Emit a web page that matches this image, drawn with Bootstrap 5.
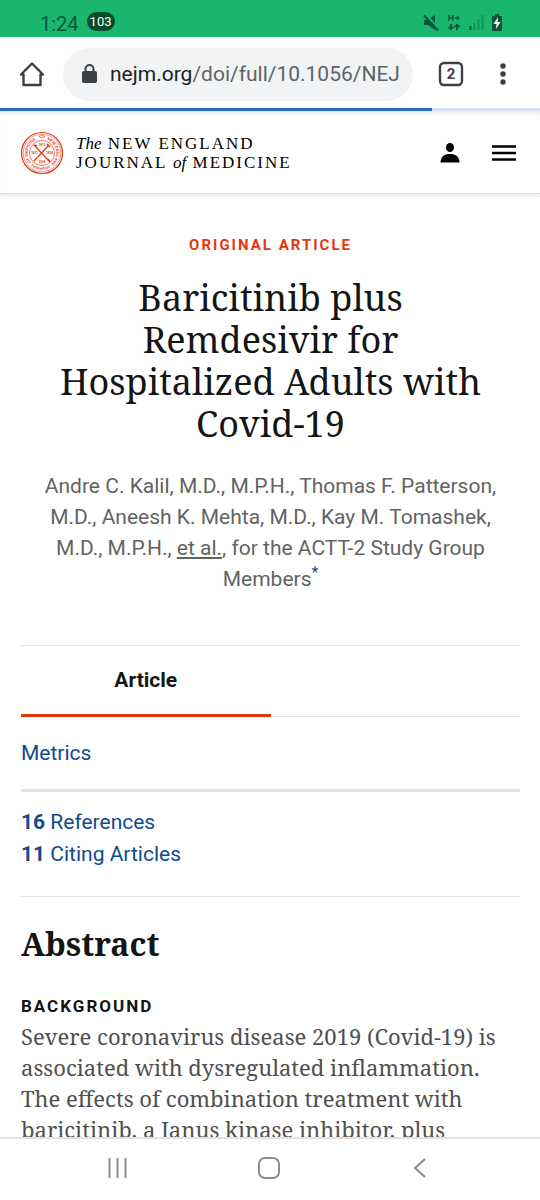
<!DOCTYPE html>
<html lang="en">
<head>
<meta charset="utf-8">
<meta name="viewport" content="width=device-width, initial-scale=1">
<title>Baricitinib plus Remdesivir for Hospitalized Adults with Covid-19</title>
<link href="https://cdn.jsdelivr.net/npm/bootstrap@5.3.0/dist/css/bootstrap.min.css" rel="stylesheet">
<style>
  :root { --serif: "Noto Serif", "DejaVu Serif Condensed", "DejaVu Serif", serif; --ink: #151515; --red: #e0390f; --blue: #0f4b8f; --rule: #e2e2e2; }
  body { font-family: Roboto, "Liberation Sans", sans-serif; color: var(--ink); font-size: 21px; line-height: 32px; }
  button { background: none; border: 0; padding: 0; display: flex; color: inherit; }
  svg { display: block; flex: none; }
  a { color: var(--blue); text-decoration: none; }
  .status { background: #18b76d; color: #075634; height: 37px; padding: 8px 38px 0 40px; font-size: 20px; line-height: 32px; }
  .count { background: #074b2c; color: #fff; font-size: 13px; line-height: 19px; padding: 0 3px; border-radius: 10px; }
  .signals { gap: 8px; padding-top: 5px; }
  .browser { height: 71px; padding: 3px 24px 0 19px; color: #3c4043; }
  .address { background: #f1f3f4; height: 53px; border-radius: 27px; padding: 0 12px 0 19px; margin: 0 25px 0 18px; gap: 13px; }
  .address a { font-size: 21px; color: #5f6368; }
  .host { color: #202124; }
  .more { margin-left: 26px; }
  .load { height: 3px; background: #d6dff3; border-radius: 0; }
  .load .progress-bar { background: #2069c8; }
  .masthead { height: 83px; padding: 1px 23px 0 20px; border-bottom: 1px solid #ddd; box-shadow: 0 2px 3px #e9e9e9, inset 0 4px 4px -2px #e4e4e4; }
  .brand { font-family: "Liberation Serif", serif; font-size: 17px; line-height: 19px; letter-spacing: 2px; color: #000; }
  .brand i { letter-spacing: 0; }
  .seal-text { font: bold 4px "Liberation Sans", sans-serif; fill: var(--red); }
  .seal-year { font: bold 3px "Liberation Sans", sans-serif; fill: var(--red); }
  main { overflow: hidden; padding: 35px 20px 0 21px; min-height: 0; }
  .kicker { font-size: 15px; line-height: 32px; font-weight: 700; letter-spacing: 2px; }
  .kicker a { color: var(--red); }
  h1 { font: 400 36px/42px var(--serif); margin: 16px 24px 26px; }
  .authors { color: #636363; margin: 0 20px 50px; line-height: 31px; }
  .authors a { text-decoration: underline; color: inherit; }
  .authors sup a { color: var(--blue); text-decoration: none; }
  .tabs { border-top: 1px solid var(--rule); border-bottom: 1px solid var(--rule); }
  .tabs .nav-link { color: var(--ink); font-weight: 700; line-height: 32px; padding: 18px 0; border-bottom: 3px solid var(--red); margin-bottom: -1px; }
  .metrics { padding: 20px 0; border-bottom: 3px solid var(--rule); }
  .refs { padding: 14px 0 26px; border-bottom: 1px solid var(--rule); }
  h2 { font: 700 32px/44px var(--serif); margin: 25px 0; }
  h3 { font-size: 17px; line-height: 30px; font-weight: 700; letter-spacing: 2px; margin: 0; }
  .abstract { font-family: var(--serif); color: #505050; font-size: 22px; line-height: 31px; }
  .keys { height: 63px; border-top: 2px solid var(--rule); color: #8c8c8c; background: #fff; padding: 0 44px 4px 42px; }
</style>
</head>
<body class="d-flex flex-column vh-100 bg-white">
<div class="status d-flex align-items-start flex-shrink-0">
  <span>1:24</span><span class="count ms-2 mt-1">103</span>
  <div class="signals d-flex align-items-center ms-auto">
    <svg width="16" height="20" viewBox="0 0 16 20" fill="currentColor"><path d="M1 7h4l7-5v15L5 12H1z"/><path d="M2 1l14 15" stroke="#18b76d" stroke-width="2"/><path d="M1 2.500l14 15" stroke="currentColor" stroke-width="2"/></svg>
    <svg width="14" height="20" viewBox="0 0 14 20" fill="none" stroke="currentColor" stroke-width="1.500"><path d="M2 2v6M6 2v6M2 5h4M8 5h5M10.500 3v4"/><path d="M4 11v5M10 17v-6" stroke-width="2"/><path d="M1.500 14L4 16.500 6.500 14M7.500 14L10 11.500 12.500 14"/></svg>
    <svg width="15" height="20" viewBox="0 0 15 20" stroke="currentColor" stroke-width="2"><path d="M1.500 13v4"/><path d="M5.500 10v7M9.500 6v11M13.500 2v15" opacity=".35"/></svg>
    <svg width="10" height="20" viewBox="0 0 10 20"><path d="M3 1h4v2h3v15H0V3h3z" fill="currentColor"/><path d="M6 4L1.500 11H4.500L4 16 8.500 9H5.500z" fill="#fff"/></svg>
  </div>
</div>
<div class="browser d-flex align-items-center flex-shrink-0">
  <button type="button" aria-label="Home"><svg width="26" height="26" viewBox="0 0 26 26" fill="none" stroke="currentColor" stroke-width="2.400" stroke-linejoin="round"><path d="M2 13.500L13 2.500l11 11H21.500V24H4.500V13.500z"/></svg></button>
  <div class="address d-flex align-items-center flex-fill">
    <svg width="15" height="20" viewBox="0 0 15 20"><rect y="7" width="15" height="12" rx="2" fill="currentColor"/><path d="M3.500 8V5a4 4 0 0 1 8 0v3" fill="none" stroke="currentColor" stroke-width="2"/></svg>
    <a href="#" class="text-nowrap"><span class="host">nejm.org</span>/doi/full/10.1056/NEJ</a>
  </div>
  <button type="button" aria-label="Tabs"><svg width="26" height="26" viewBox="0 0 26 26"><rect x="2" y="2" width="22" height="22" rx="4" fill="none" stroke="currentColor" stroke-width="2.400"/><text x="13" y="18" text-anchor="middle" font-size="15" font-weight="700" fill="currentColor">2</text></svg></button>
  <button type="button" class="more" aria-label="Menu"><svg width="26" height="26" viewBox="0 0 26 26" fill="currentColor"><circle cx="13" cy="5" r="2.700"/><circle cx="13" cy="13" r="2.700"/><circle cx="13" cy="21" r="2.700"/></svg></button>
</div>
<div class="progress load flex-shrink-0" role="progressbar" aria-label="Page loading"><div class="progress-bar" style="width:80%"></div></div>
<header class="masthead d-flex align-items-center flex-shrink-0">
  <a href="#" class="d-flex align-items-center">
    <svg width="44" height="44" viewBox="0 0 44 44" fill="none" stroke="#e0390f">
      <circle cx="22" cy="22" r="20.500" stroke-width="1.200"/><circle cx="22" cy="22" r="18.800" stroke-width=".5"/><circle cx="22" cy="22" r="12.500" stroke-width=".7"/>
      <path id="ring" d="M22 7.700a14.300 14.300 0 1 1-.01 0" stroke="none"/>
      <text stroke="none" class="seal-text"><textPath href="#ring" startOffset="5">NEW ENGLAND JOURNAL OF MEDICINE</textPath></text>
      <path d="M19 5.500l3-1.500 3 1.500-3 1.500z" stroke-width=".7"/>
      <path d="M15 15l14 15M29 14L14 30" stroke-width="1.200"/><path d="M27 13l3 3M14 14l3 1M28 28l2 3" stroke-width="1.500"/>
      <g stroke="none" class="seal-year" text-anchor="middle"><text x="22" y="15">1812</text><text x="14.500" y="23">1821</text><text x="29.500" y="23">1828</text><text x="22" y="32">1928</text></g>
    </svg>
    <span class="brand ms-2 ps-1"><i>The</i> NEW ENGLAND<br>JOURNAL <i>of</i> MEDICINE</span>
  </a>
  <button type="button" class="ms-auto" aria-label="Account"><svg width="26" height="26" viewBox="0 0 26 26" fill="#000"><ellipse cx="13" cy="7.500" rx="4" ry="4.500"/><path d="M3.500 22.500c0-6 4-8.500 9.500-8.500s9.500 2.500 9.500 8.500z"/></svg></button>
  <button type="button" class="ms-4 ps-1" aria-label="Site menu"><svg width="26" height="26" viewBox="0 0 26 26" stroke="#000" stroke-width="2.500"><path d="M1 6.500h24M1 13h24M1 19.500h24"/></svg></button>
</header>
<main class="flex-fill">
  <div class="kicker text-center"><a href="#">ORIGINAL ARTICLE</a></div>
  <h1 class="text-center">Baricitinib plus Remdesivir for Hospitalized Adults with Covid-19</h1>
  <p class="authors text-center">Andre C. Kalil, M.D., M.P.H., Thomas F. Patterson, M.D., Aneesh K. Mehta, M.D., Kay M. Tomashek, M.D., M.P.H., <a href="#">et al.</a>, for the ACTT-2 Study Group Members<sup><a href="#">*</a></sup></p>
  <nav class="tabs nav"><a class="nav-link w-50 text-center" href="#">Article</a></nav>
  <div class="metrics"><a href="#">Metrics</a></div>
  <div class="refs"><a class="d-block" href="#"><b>16</b> References</a><a class="d-block" href="#"><b>11</b> Citing Articles</a></div>
  <h2>Abstract</h2>
  <h3>BACKGROUND</h3>
  <p class="abstract">Severe coronavirus disease 2019 (Covid-19) is associated with dysregulated inflammation. The effects of combination treatment with baricitinib, a Janus kinase inhibitor, plus</p>
</main>
<footer class="keys d-flex justify-content-around align-items-center flex-shrink-0">
  <button type="button" aria-label="Recents"><svg width="24" height="24" viewBox="0 0 24 24" stroke="currentColor" stroke-width="2"><path d="M3.500 2v20M11.500 2v20M19.500 2v20"/></svg></button>
  <button type="button" aria-label="Home screen"><svg width="24" height="24" viewBox="0 0 24 24" fill="none" stroke="currentColor" stroke-width="2"><rect x="2" y="2" width="20" height="20" rx="6"/></svg></button>
  <button type="button" aria-label="Back"><svg width="24" height="24" viewBox="0 0 24 24" fill="none" stroke="currentColor" stroke-width="2"><path d="M17 3L7 12l10 9"/></svg></button>
</footer>
<script src="https://cdn.jsdelivr.net/npm/bootstrap@5.3.0/dist/js/bootstrap.bundle.min.js"></script>
</body>
</html>
